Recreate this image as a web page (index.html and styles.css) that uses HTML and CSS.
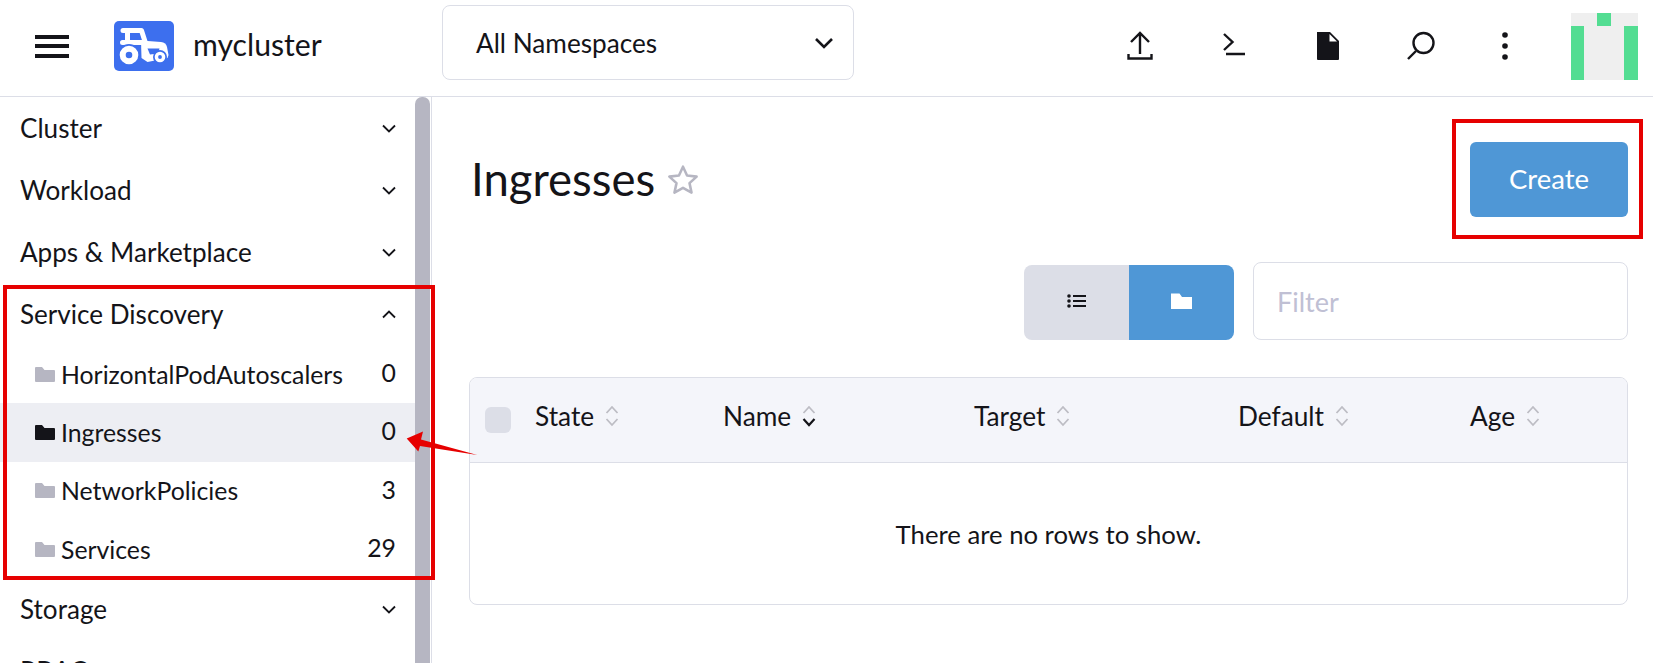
FILE: index.html
```html
<!DOCTYPE html>
<html lang="en">
<head>
<meta charset="utf-8">
<title>Ingresses</title>
<link rel="stylesheet" href="styles.css">
</head>
<body>
<div class="app">
  <header class="topbar">
    <button class="menu" aria-label="Menu"><span></span><span></span><span></span></button>
    <svg class="logo" viewBox="0 0 60 50" aria-hidden="true">
      <rect width="60" height="50" rx="5" fill="#3d6fee"/>
      <path d="M9 9.500h18.500L31.500 22M13.500 9.500V21M8.500 21.500h20" fill="none" stroke="#fff" stroke-width="5" stroke-linecap="round" stroke-linejoin="round"/>
      <path d="M27 19.500l20 1.500q5 .500 6 5l1.500 8-1 3-20 4-6-4z" fill="#fff"/>
      <path d="M33.500 27.500h12l-1.500 5-8 1z" fill="#3d6fee"/>
      <circle cx="15" cy="34" r="11" fill="#3d6fee"/>
      <circle cx="15" cy="34" r="6.300" fill="none" stroke="#fff" stroke-width="6"/>
      <circle cx="46" cy="36" r="7" fill="#3d6fee"/>
      <circle cx="46" cy="36" r="3.600" fill="none" stroke="#fff" stroke-width="3.400"/>
    </svg>
    <span class="cluster">mycluster</span>
    <div class="ns">
      <span>All Namespaces</span>
      <svg class="ns-caret" viewBox="0 0 20 12" aria-hidden="true"><path d="M2 2l8 8 8-8" fill="none" stroke="#141419" stroke-width="2.600"/></svg>
    </div>
    <div class="actions">
      <svg class="act" viewBox="0 0 26 30" aria-hidden="true"><path d="M13 23V3M4 11l9-9 9 9M1.500 23v4.500h23V23" fill="none" stroke="#141419" stroke-width="2.400"/></svg>
      <svg class="act" viewBox="0 0 26 30" aria-hidden="true"><path d="M3 3l8.500 8L3 19M5 23h19" fill="none" stroke="#141419" stroke-width="2.400"/></svg>
      <svg class="act" viewBox="0 0 26 30" aria-hidden="true"><path d="M2 1h11l2 0 9 9v18a1 1 0 0 1-1 1H3a1 1 0 0 1-1-1z" fill="#141419"/><path d="M14.500 3v7.500H22z" fill="#fff"/></svg>
      <svg class="act act-search" viewBox="0 0 30 30" aria-hidden="true"><circle cx="17.500" cy="12" r="10" fill="none" stroke="#141419" stroke-width="2.400"/><path d="M10 20l-8 8" fill="none" stroke="#141419" stroke-width="2.400"/></svg>
      <svg class="act dots" viewBox="0 0 8 30" aria-hidden="true"><circle cx="4" cy="4" r="2.800" fill="#141419"/><circle cx="4" cy="15" r="2.800" fill="#141419"/><circle cx="4" cy="26" r="2.800" fill="#141419"/></svg>
    </div>
    <svg class="avatar" viewBox="0 0 5 5" aria-hidden="true" shape-rendering="crispEdges">
      <rect width="5" height="5" fill="#efefef"/>
      <path d="M0 1h1v4H0zM4 1h1v4H4zM2 0h1v1H2z" fill="#53dd92"/>
    </svg>
  </header>
  <div class="body">
    <aside class="side">
      <nav class="nav">
        <div class="group"><span>Cluster</span><svg class="chev" viewBox="0 0 14 9"><path d="M1 1.500l6 6 6-6"/></svg></div>
        <div class="group"><span>Workload</span><svg class="chev" viewBox="0 0 14 9"><path d="M1 1.500l6 6 6-6"/></svg></div>
        <div class="group"><span>Apps &amp; Marketplace</span><svg class="chev" viewBox="0 0 14 9"><path d="M1 1.500l6 6 6-6"/></svg></div>
        <div class="group"><span>Service Discovery</span><svg class="chev" viewBox="0 0 14 9"><path d="M1 7.500l6-6 6 6"/></svg></div>
        <div class="item"><svg class="folder" viewBox="0 0 20 15"><path d="M0 1a1 1 0 0 1 1-1h6l2.500 3H19a1 1 0 0 1 1 1v10a1 1 0 0 1-1 1H1a1 1 0 0 1-1-1z"/></svg><span class="label">HorizontalPodAutoscalers</span><span class="count">0</span></div>
        <div class="item active"><svg class="folder" viewBox="0 0 20 15"><path d="M0 1a1 1 0 0 1 1-1h6l2.500 3H19a1 1 0 0 1 1 1v10a1 1 0 0 1-1 1H1a1 1 0 0 1-1-1z"/></svg><span class="label">Ingresses</span><span class="count">0</span></div>
        <div class="item"><svg class="folder" viewBox="0 0 20 15"><path d="M0 1a1 1 0 0 1 1-1h6l2.500 3H19a1 1 0 0 1 1 1v10a1 1 0 0 1-1 1H1a1 1 0 0 1-1-1z"/></svg><span class="label">NetworkPolicies</span><span class="count">3</span></div>
        <div class="item"><svg class="folder" viewBox="0 0 20 15"><path d="M0 1a1 1 0 0 1 1-1h6l2.500 3H19a1 1 0 0 1 1 1v10a1 1 0 0 1-1 1H1a1 1 0 0 1-1-1z"/></svg><span class="label">Services</span><span class="count">29</span></div>
        <div class="group"><span>Storage</span><svg class="chev" viewBox="0 0 14 9"><path d="M1 1.500l6 6 6-6"/></svg></div>
        <div class="group"><span>RBAC</span><svg class="chev" viewBox="0 0 14 9"><path d="M1 1.500l6 6 6-6"/></svg></div>
      </nav>
      <div class="scroll"></div>
    </aside>
    <main class="main">
      <div class="title-row">
        <div class="title"><h1>Ingresses</h1>
          <svg class="star" viewBox="0 0 30 29" aria-hidden="true"><path d="M15 2.500l3.800 8.300 9 1-6.700 6.100 1.900 8.900L15 22.300l-8 4.500 1.900-8.900-6.700-6.100 9-1z" fill="none" stroke="#b6b6c2" stroke-width="2.400" stroke-linejoin="round"/></svg>
        </div>
        <button class="create">Create</button>
      </div>
      <div class="tools">
        <div class="toggle">
          <div class="tg tg-list"><svg viewBox="0 0 19 14" aria-hidden="true"><path d="M6 2h13M6 7h13M6 12h13" stroke="#141419" stroke-width="2.200"/><circle cx="2" cy="2" r="1.800" fill="#141419"/><circle cx="2" cy="7" r="1.800" fill="#141419"/><circle cx="2" cy="12" r="1.800" fill="#141419"/></svg></div>
          <div class="tg tg-folder"><svg viewBox="0 0 21 16" aria-hidden="true"><path d="M0 .500h8.500L11 4h10v12H0z" fill="#fff"/></svg></div>
        </div>
        <div class="filter">Filter</div>
      </div>
      <section class="table">
        <div class="thead">
          <span class="check"></span>
          <span class="th">State<svg class="sort" viewBox="0 0 14 22"><path class="off" d="M1.500 8L7 2l5.500 6M1.500 14L7 20l5.500-6"/></svg></span>
          <span class="th">Name<svg class="sort" viewBox="0 0 14 22"><path class="off" d="M1.500 8L7 2l5.500 6"/><path class="on" d="M1.500 14L7 20l5.500-6"/></svg></span>
          <span class="th">Target<svg class="sort" viewBox="0 0 14 22"><path class="off" d="M1.500 8L7 2l5.500 6M1.500 14L7 20l5.500-6"/></svg></span>
          <span class="th">Default<svg class="sort" viewBox="0 0 14 22"><path class="off" d="M1.500 8L7 2l5.500 6M1.500 14L7 20l5.500-6"/></svg></span>
          <span class="th">Age<svg class="sort" viewBox="0 0 14 22"><path class="off" d="M1.500 8L7 2l5.500 6M1.500 14L7 20l5.500-6"/></svg></span>
        </div>
        <div class="empty">There are no rows to show.</div>
      </section>
    </main>
  </div>
</div>
<div class="mark mark-nav"></div>
<div class="mark mark-create"></div>
<svg class="arrow" viewBox="0 0 90 60" aria-hidden="true"><path d="M6.700 28.500L23 21.500 21 29.500l56.300 15.500L20 36l-1.700 5.500z" fill="#e60000"/></svg>
</body>
</html>
```
FILE: styles.css
```css
* { box-sizing: border-box; }
html, body { margin: 0; height: 100%; overflow: hidden; background: #fff; }
body { font-family: Lato, "Liberation Sans", sans-serif; color: #141419; position: relative; }
.app { height: 663px; display: flex; flex-direction: column; }

.topbar { height: 97px; flex: none; display: flex; align-items: center; border-bottom: 1px solid #dcdee7; position: relative; }
.menu { width: 34px; height: 23px; margin: -4px 0 0 35px; padding: 0; border: 0; background: none; display: flex; flex-direction: column; justify-content: space-between; }
.menu span { display: block; height: 4px; background: #141419; }
.logo { width: 60px; height: 50px; margin: -4px 0 0 45px; flex: none; }
.cluster { font-size: 30.200px; margin: -8px 0 0 19px; width: 128px; line-height: 1; }
.ns { width: 412px; height: 75px; margin: -11px 0 0 121px; border: 1px solid #dcdee7; border-radius: 8px; display: flex; align-items: center; justify-content: space-between; padding: 0 19px 0 33px; font-size: 26.200px; }
.ns-caret { width: 20px; height: 12px; }
.actions { display: flex; align-items: center; margin: -4px 0 0 273px; }
.act { width: 26px; height: 30px; margin-right: 68px; flex: none; }
.act-search { width: 30px; margin-left: -3px; margin-right: 65px; }
.dots { width: 8px; margin-right: 0; }
.avatar { width: 68px; height: 67px; margin: -4px 0 0 61px; flex: none; }

.body { flex: 1; display: flex; min-height: 0; }
.side { width: 432px; flex: none; position: relative; overflow: hidden; border-right: 1px solid #dcdee7; }
.nav { width: 415px; }
.group { height: 62px; display: flex; align-items: center; justify-content: space-between; padding: 0 19px 0 20px; font-size: 26.100px; }
.chev { width: 14px; height: 9px; flex: none; }
.chev path { fill: none; stroke: #141419; stroke-width: 1.800; }
.item { height: 58.300px; display: flex; align-items: center; padding: 0 19px 0 35px; font-size: 24.800px; }
.item.active { background: #edeef3; }
.folder { width: 20px; height: 15px; margin-right: 6px; flex: none; fill: #b6b6c2; }
.item.active .folder { fill: #141419; }
.label { flex: 1; }
.count { margin-bottom: 3px; }
.scroll { position: absolute; top: 0; left: 415px; width: 15px; height: 100%; background: #b6b6c2; border-radius: 7px 7px 0 0; }

.main { flex: 1; padding: 0 25px 0 37px; min-width: 0; }
.title-row { display: flex; justify-content: space-between; align-items: center; padding-top: 45px; height: 119px; }
.title { display: flex; align-items: center; gap: 12px; margin-left: 2px; }
h1 { margin: 0; font-size: 45.500px; font-weight: 400; line-height: 1; }
.star { width: 32px; height: 31px; }
.create { width: 158px; height: 75px; border: 0; border-radius: 6px; background: #4f97d6; color: #fff; font: 400 27.500px Lato, "Liberation Sans", sans-serif; padding: 0 0 2px 0; }
.tools { display: flex; justify-content: flex-end; align-items: flex-end; gap: 19px; margin-top: 46px; }
.toggle { display: flex; height: 75px; border-radius: 8px; overflow: hidden; }
.tg { width: 105px; display: flex; align-items: center; justify-content: center; padding-bottom: 4px; }
.tg-list { background: #dcdee7; }
.tg-folder { background: #4f97d6; }
.tg-list svg { width: 19px; height: 14px; }
.tg-folder svg { width: 21px; height: 16px; }
.filter { width: 375px; height: 78px; border: 1px solid #dcdee7; border-radius: 8px; display: flex; align-items: center; padding-left: 23px; font-size: 27px; color: #c0c0d4; }
.table { margin-top: 37px; height: 228px; border: 1px solid #dcdee7; border-radius: 8px; overflow: hidden; }
.thead { height: 85px; background: #f4f5fa; border-bottom: 1px solid #dcdee7; display: grid; grid-template-columns: 50px 188px 251px 264px 232px 1fr; align-items: center; padding-left: 15px; font-size: 26.250px; }
.check { width: 26px; height: 26px; border-radius: 6px; background: #dcdee7; }
.th { display: flex; align-items: center; gap: 11px; padding-bottom: 8px; }
.sort { width: 14px; height: 22px; }
.sort path { fill: none; stroke-width: 1.800; }
.sort .off { stroke: #bdbdc4; }
.sort .on { stroke: #141419; stroke-width: 2.200; }
.empty { height: 141px; display: flex; align-items: center; justify-content: center; font-size: 25.700px; }

.mark { position: absolute; border: 4px solid #e60000; }
.mark-nav { left: 3px; top: 285px; width: 432px; height: 295px; }
.mark-create { left: 1452px; top: 119px; width: 191px; height: 120px; }
.arrow { position: absolute; left: 400px; top: 410px; width: 90px; height: 60px; }
```
